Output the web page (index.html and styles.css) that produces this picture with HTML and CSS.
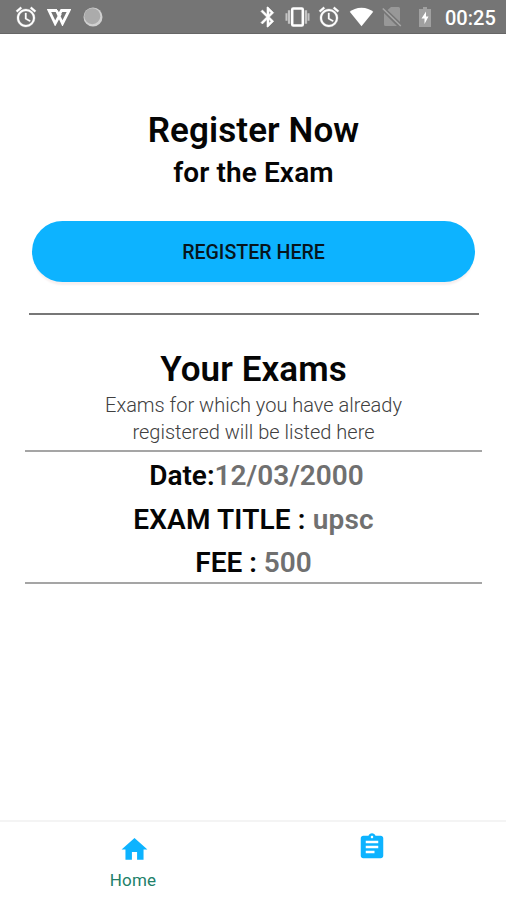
FILE: index.html
```html
<!DOCTYPE html>
<html lang="en">
<head>
<meta charset="utf-8">
<title>Exams</title>
<link rel="stylesheet" href="styles.css">
</head>
<body>
<svg class="defs" width="0" height="0">
  <symbol id="alarm" viewBox="0 0 24 24"><path stroke="#fff" stroke-width=".3" d="M22 5.720l-4.600-3.860-1.290 1.530 4.600 3.860L22 5.720zM7.880 3.390L6.600 1.860 2 5.710l1.290 1.530 4.590-3.850zM12.500 8H11v6l4.750 2.850.75-1.230-4-2.370V8zM12 4c-4.970 0-9 4.030-9 9s4.020 9 9 9a9 9 0 0 0 0-18zm0 16c-3.870 0-7-3.130-7-7s3.130-7 7-7 7 3.130 7 7-3.130 7-7 7z"/></symbol>
</svg>
<header class="status">
  <div class="left">
    <svg class="ic"><use href="#alarm"/></svg>
    <svg class="wps" viewBox="0 0 24 17"><path d="M10 1.500H2L8.200 14.500 13.500 4.500M9.500 1.500L15.500 14.500 22 1.500H14.500L12 6" fill="none" stroke="#fff" stroke-width="2.800"/></svg>
    <svg class="dot" viewBox="0 0 20 20"><circle cx="10" cy="10" r="9.500" fill="#d0d0d0"/><circle cx="9.300" cy="9.200" r="8" fill="#ababab"/></svg>
  </div>
  <div class="right">
    <svg class="ic bt" viewBox="0 0 24 24"><path stroke="#fff" stroke-width=".6" d="M17.710 7.710L12 2h-1v7.590L6.410 5 5 6.410 10.590 12 5 17.590 6.410 19 11 14.410V22h1l5.710-5.710-4.300-4.290 4.300-4.290zM13 5.830l1.880 1.880L13 9.590V5.830zm1.880 10.460L13 18.170v-3.760l1.880 1.880z"/></svg>
    <svg class="vib" viewBox="0 0 26 22"><path d="M.5 7h2v8h-2zM3 4h2.500v14H3zM20.500 4H23v14h-2.500zM23.500 7h2v8h-2z" fill="#c4c4c4"/><rect x="7.500" y="2.200" width="11" height="17.600" rx="1" fill="none" stroke="#fff" stroke-width="2.600"/></svg>
    <svg class="ic al"><use href="#alarm"/></svg>
    <svg class="wifi" viewBox="0 0 26 20"><path d="M13 19.500L.8 4.600C3.500 2 8 .3 13 .3s9.500 1.700 12.200 4.300z"/></svg>
    <svg class="sim" viewBox="0 0 20 20"><path d="M5.500 3L9 0h7.500Q18 0 18 1.500V15zM2 6l13 13H3.500Q2 19 2 17.500z" fill="#989898"/><path d="M.8 1.500l18 17.500" stroke="#a8a8a8" stroke-width="1.500"/></svg>
    <svg class="bat" viewBox="0 0 12 20"><path d="M0 2h4V0h4v2h4v18H0z" fill="#a0a0a0"/><path d="M7 4.500L2.500 11.500H5.500V17L9.500 9.500H7z"/></svg>
    <span class="clock">00:25</span>
  </div>
</header>
<main>
  <h1>Register Now</h1>
  <h2>for the Exam</h2>
  <button class="register">REGISTER HERE</button>
  <hr>
  <h1 class="exams-title">Your Exams</h1>
  <p class="hint">Exams for which you have already<br>registered will be listed here</p>
  <section class="exam">
    <div class="date">Date:<span>12/03/2000</span></div>
    <div class="name">EXAM TITLE : <span>upsc</span></div>
    <div class="fee">FEE : <span>500</span></div>
  </section>
</main>
<nav>
  <a class="home"><svg viewBox="0 0 24 24"><path d="M10 20v-6h4v6h5v-8h3L12 3 2 12h3v8z"/></svg><span>Home</span></a>
  <a class="list"><svg viewBox="0 0 24 24"><path d="M19 3h-4.180C14.400 1.840 13.300 1 12 1c-1.300 0-2.400.84-2.820 2H5c-1.100 0-2 .9-2 2v14c0 1.100.9 2 2 2h14c1.100 0 2-.9 2-2V5c0-1.100-.9-2-2-2zm-7 0c.55 0 1 .45 1 1s-.45 1-1 1-1-.45-1-1 .45-1 1-1zm2 14H7v-2h7v2zm3-4H7v-2h10v2zm0-4H7V7h10v2z"/></svg></a>
</nav>
</body>
</html>
```
FILE: styles.css
```css
* { box-sizing: border-box; }
body { margin: 0; height: 900px; display: flex; flex-direction: column; background: #fff; color: #050505; font-family: Roboto, sans-serif; overflow: hidden; }
.defs { position: absolute; }
svg { display: block; flex: none; }
.status { height: 34px; background: #757575; border-bottom: 1px solid #666; display: flex; justify-content: space-between; padding: 0 11px 0 14px; fill: #fff; }
.left, .right { display: flex; align-items: center; height: 34px; }
.ic { width: 24px; height: 24px; }
.wps { width: 24px; height: 17px; margin-left: 9px; }
.dot { width: 20px; height: 20px; margin-left: 12px; }
.bt { width: 24px; }
.vib { width: 25px; height: 22px; margin-left: 5px; }
.al { margin-left: 7px; }
.wifi { width: 25px; height: 20px; margin-left: 8px; }
.sim { width: 20px; height: 20px; margin-left: 8px; }
.bat { width: 12px; height: 20px; margin-left: 17px; }
.clock { width: 50px; margin-left: 14px; color: #fff; font-size: 20px; font-weight: 500; line-height: 34px; white-space: nowrap; padding-top: 2px; }
main { flex: 1; display: flex; flex-direction: column; padding: 76px 24px 0 25px; text-align: center; }
h1, h2, p { margin: 0; }
h1 { font-size: 35px; line-height: 42px; font-weight: 600; letter-spacing: .1px; }
h2 { font-size: 28px; line-height: 34px; font-weight: 600; margin-top: 4px; letter-spacing: .1px; }
.register { margin: 31px 7px 0; height: 61px; border: 0; border-radius: 31px; background: #0db3ff; color: #07151c; font: 500 19.600px/59px Roboto, sans-serif; padding: 2px 0 0; box-shadow: 0 4px 2px -1px #f7f0f0; }
hr { width: 450px; height: 2px; margin: 31px 0 0 4px; border: 0; background: #777; }
.exams-title { margin-top: 34px; }
.hint { font-size: 20px; line-height: 27px; font-weight: 300; color: #404040; margin-top: 1px; }
.exam { margin-top: 4px; height: 134px; border-top: 2px solid #a5a5a5; border-bottom: 2px solid #a5a5a5; font-size: 28px; line-height: 43.500px; font-weight: 600; padding-top: 2px; }
.exam span { color: #707070; }
.date { padding-left: 6px; }
.name { letter-spacing: .15px; }
nav { height: 80px; border-top: 2px solid #f4f4f4; display: grid; grid-template-columns: 269px 205px; fill: #0db3ff; }
nav a { display: flex; flex-direction: column; align-items: center; }
.home svg { width: 31px; height: 31px; margin-top: 12px; }
.home span { color: #21806a; font-size: 17px; line-height: 22px; margin-top: 4px; margin-left: -3px; letter-spacing: .2px; }
.list svg { width: 30px; height: 30px; margin-top: 10px; }
```
